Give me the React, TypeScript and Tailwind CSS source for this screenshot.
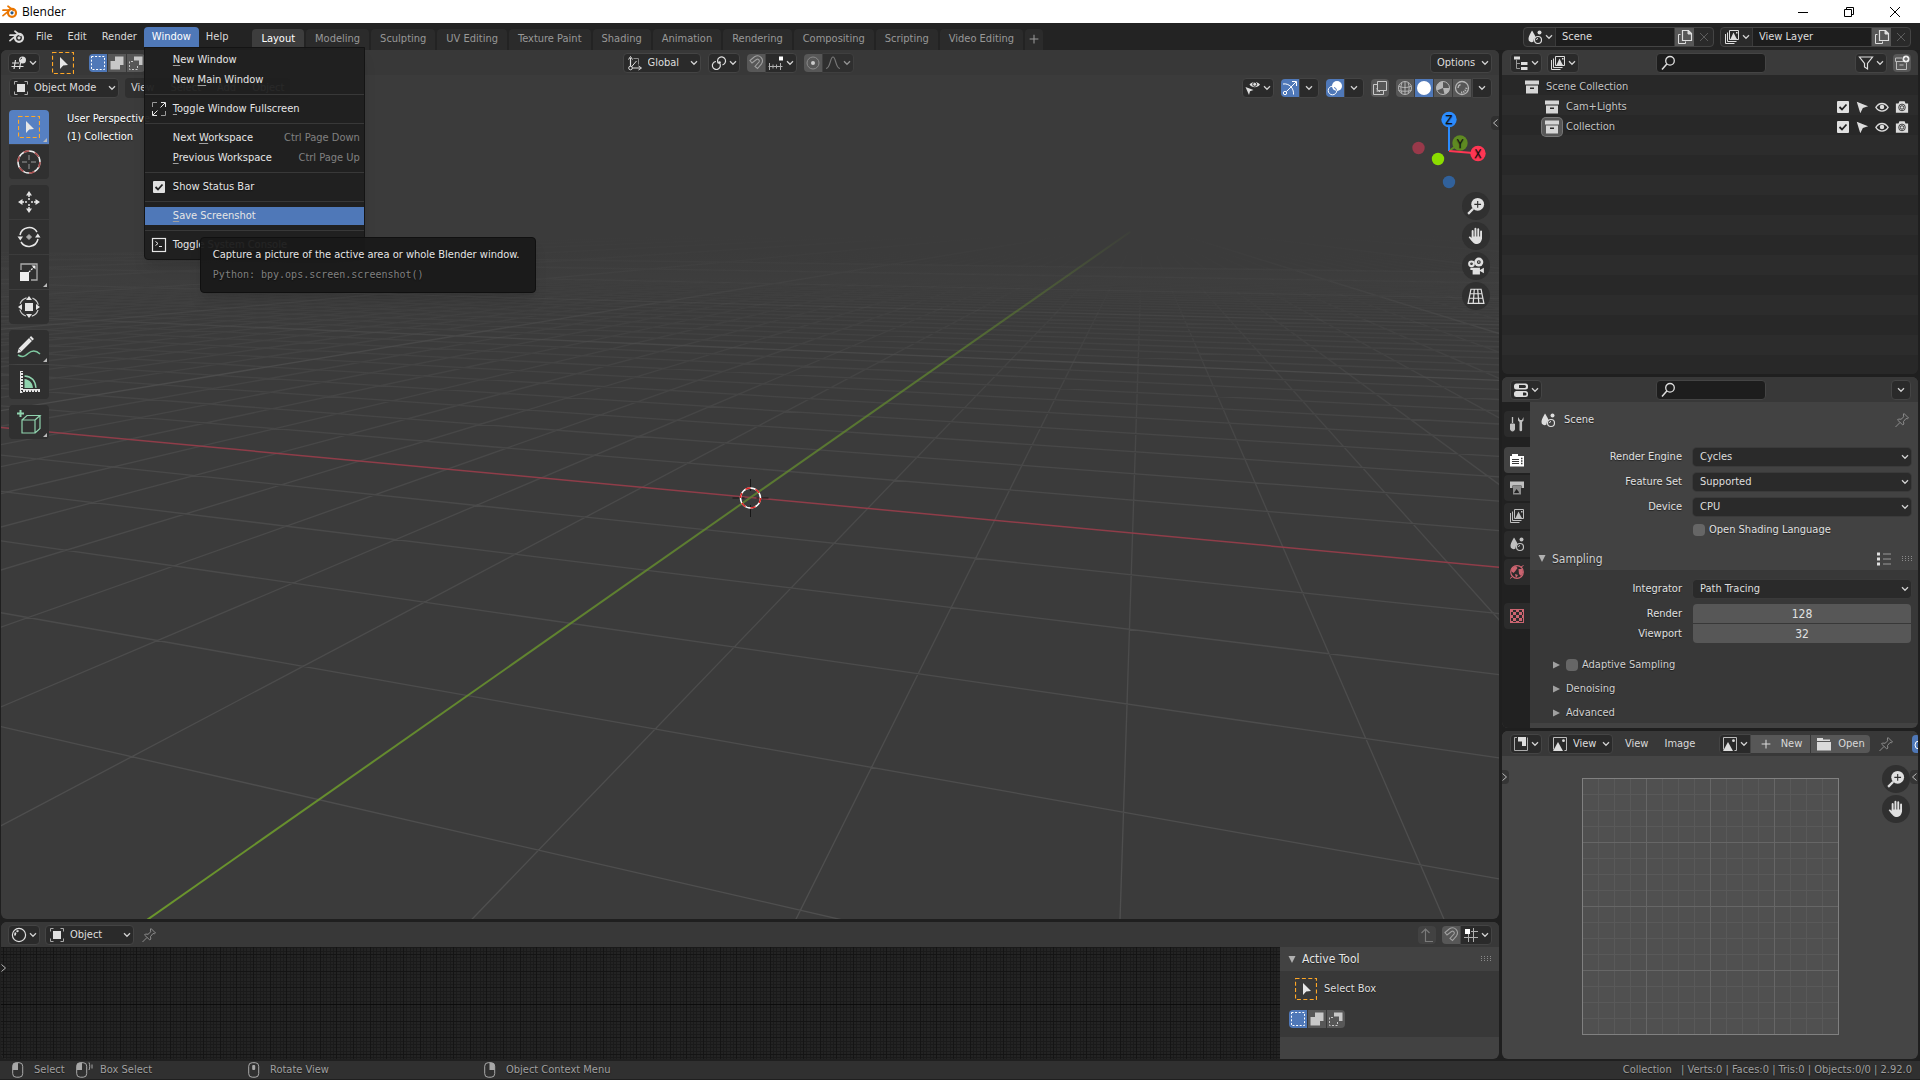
import type { ReactNode } from 'react';
import clsx from 'clsx';

/* ---------- icons ---------- */

function Svg({ children, size = 16, className }: { children: ReactNode; size?: number; className?: string }) {
  return (
    <svg
      width={size}
      height={size}
      viewBox="0 0 16 16"
      fill="none"
      stroke="currentColor"
      className={clsx('shrink-0', className)}
      aria-hidden="true"
    >
      {children}
    </svg>
  );
}

function BlenderLogo({ colored = false }: { colored?: boolean }) {
  return (
    <Svg className={colored ? 'text-[#ea7600]' : 'text-[#dcdcdc]'}>
      <path d="M1 6.2h6.5M6 2.2l5.5 4.2M1 11.6l5.5-4.4" strokeWidth="1.7" strokeLinecap="round" />
      <circle cx="10" cy="8.8" r="4" strokeWidth="2.2" />
      <circle cx="10" cy="8.8" r="1.6" fill={colored ? '#265787' : 'currentColor'} stroke="none" />
    </Svg>
  );
}

const Chevron = () => (
  <svg width="8" height="6" viewBox="0 0 8 6" fill="none" stroke="#d0d0d0" strokeWidth="1.3" className="shrink-0">
    <path d="M1 1.3l3 3 3-3" />
  </svg>
);

const SceneIcon = () => (
  <Svg>
    <path d="M5 1.5S1.5 7 1.5 10a3 3 0 0 0 5 2.4c.2-2.5 1.2-3.5 2-4.4C7.5 5 5 1.5 5 1.5z" fill="currentColor" stroke="none" />
    <circle cx="12.5" cy="3.5" r="2" fill="currentColor" stroke="none" />
    <circle cx="11" cy="11" r="3.5" strokeWidth="1.2" />
    <path d="M9.5 11a1.5 1.5 0 0 1 1.5-1.5" />
  </Svg>
);

const LayersIcon = () => (
  <Svg>
    <path d="M1.5 5v9.5h9M3.500 3.500v9h9" />
    <path d="M5.500 1.500h9v9h-9z" />
    <path d="M6.500 10l3-6.500 2.500 5 1 1.500z" fill="currentColor" stroke="none" />
    <path d="M12 3h1.500v1.500H12z" fill="currentColor" stroke="none" />
  </Svg>
);

const CopyIcon = () => (
  <Svg>
    <path d="M5.500 1.500h6l3 3v7h-9z" strokeWidth="1.2" />
    <path d="M11 1.500V5h3.500z" fill="currentColor" />
    <path d="M3.500 5.500h-2v9h7v-2" />
  </Svg>
);

const CrossIcon = () => (
  <Svg className="text-[#5c5c5c]">
    <path d="M4 4l8 8M12 4l-8 8" />
  </Svg>
);

const EditorIcon = () => (
  <Svg>
    <path d="M4.500 5l-1.500 9M9.500 8l-1 6M1 8h7M.5 11.500h12" strokeWidth="1.2" />
    <circle cx="11.500" cy="5" r="3.500" fill="currentColor" stroke="none" />
    <path d="M9.500 4.500a2 2 0 0 1 1.500-1.500" stroke="#333" />
  </Svg>
);

const SelectBox = () => (
  <svg width="22" height="22" viewBox="0 0 22 22" fill="none" className="shrink-0">
    <rect x=".5" y=".5" width="21" height="21" stroke="#ffa726" strokeDasharray="4 2.4" strokeWidth="1.2" />
    <path d="M8 5v12l3.200-3.400 4.800-.6z" fill="#e6e6e6" />
  </svg>
);

const SetIcon = () => (
  <Svg>
    <rect x="1.500" y="1.500" width="13" height="13" strokeDasharray="2 1.6" stroke="#fff" />
  </Svg>
);
const ExtendIcon = () => (
  <Svg>
    <path d="M6 1.500h8.500V10H11v4.500H1.500V6H6z" fill="#c8c8c8" stroke="none" />
  </Svg>
);
const SubtractIcon = () => (
  <Svg>
    <path d="M6 1.500h8.500V10H11V5.500H6z" fill="#c8c8c8" stroke="none" />
    <path d="M5 6.500H1.500v8h8V11" strokeDasharray="2 1.5" stroke="#c8c8c8" />
  </Svg>
);

const ObjectModeIcon = () => (
  <Svg>
    <path d="M1.500 4.500v-3h3M11.500 1.500h3v3M14.500 11.500v3h-3M4.500 14.500h-3v-3" stroke="#aaa" />
    <rect x="4" y="4" width="8" height="8" fill="#e0e0e0" stroke="none" />
  </Svg>
);

const AxesIcon = () => (
  <Svg>
    <path d="M3.500 13V3M3.500 13h10" strokeWidth="1.2" />
    <path d="M1.500 4.500l2-3 2 3M11.500 11l3 2-3 2M3.500 13l6-7" />
    <path d="M6.500 3.500h5v6" stroke="#888" />
    <circle cx="3.500" cy="13" r="1.800" fill="#222" />
  </Svg>
);

const PivotIcon = () => (
  <Svg>
    <path d="M7.500 8.500A4 4 0 1 1 11.500 9.800" strokeWidth="1.2" />
    <path d="M8.500 8a4 4 0 1 1-3.500-1.500" strokeWidth="1.2" />
    <circle cx="8.500" cy="7.500" r="1.300" fill="currentColor" stroke="none" />
  </Svg>
);

const MagnetIcon = () => (
  <Svg className="text-[#a0a0a0]">
    <path d="M2 5.500l4.500-3.700c5-3 10 2.200 7 7L9.500 13.500 7 11.500l4-4.500c1-2-1-3.500-2.500-2.500L4 8z" strokeWidth="1.1" />
  </Svg>
);

const SnapIcon = () => (
  <Svg>
    <path d="M.5 11.500h14M1.500 8v7M5 9.500v4M8.500 9.500v4M12.500 8v7" stroke="#b0b0b0" />
    <rect x="11" y="1.500" width="4" height="4" fill="#fff" stroke="none" />
  </Svg>
);

const SnapGridIcon = () => (
  <Svg>
    <path d="M5.500 7v8M10.500 1v14M8 4.500h7M1 10.500h14" stroke="#b0b0b0" />
    <rect x="2" y="2" width="5" height="5" fill="#fff" stroke="none" />
  </Svg>
);

const ProportionalIcon = () => (
  <Svg className="text-[#8a8a8a]">
    <circle cx="8" cy="8" r="6" />
    <circle cx="8" cy="8" r="2" fill="#ccc" stroke="none" />
  </Svg>
);

const FalloffIcon = () => (
  <Svg className="text-[#a0a0a0]">
    <path d="M1 13.500c4.500 0 4-11.500 7-11.500s2.500 11.500 7 11.500" strokeWidth="1.2" />
  </Svg>
);

const VisibilityIcon = () => (
  <Svg>
    <path d="M4.500 4.500c2.500-3.500 8-3.500 10.500 0-2.500 3.500-8 3.500-10.500 0z" fill="currentColor" stroke="none" />
    <circle cx="9.700" cy="4.300" r="2" stroke="#2b2b2b" />
    <path d="M.5 7l8 3-3.500 1.200L4 15z" fill="currentColor" stroke="none" />
  </Svg>
);

const GizmoIcon = () => (
  <Svg className="text-white">
    <circle cx="3" cy="13" r="1.700" />
    <path d="M4.300 11.700L14 2M10 1.500h4.500V6M1 4c6-1 11 4 10.500 10.500" />
  </Svg>
);

const OverlayIcon = () => (
  <Svg className="text-white">
    <circle cx="10" cy="6" r="5" fill="currentColor" stroke="none" />
    <circle cx="5.500" cy="10.500" r="4.300" />
    <path d="M7 7.500a3 3 0 0 1 2.500 3" stroke="#4f78b8" />
  </Svg>
);

const XrayIcon = () => (
  <Svg>
    <path d="M5.500 1.500h9v9h-9z" />
    <path d="M5 4.500H1.500v10h10V11" />
    <path d="M5 8v3.500h4" strokeDasharray="1.5 1" />
  </Svg>
);

const WireIcon = () => (
  <Svg className="text-[#b5b5b5]">
    <circle cx="8" cy="8" r="6.500" />
    <path d="M8 1.500v13M1.500 6c4 2 9 2 13 0M1.500 10.500c4 1 9 1 13 0M5 2.500c-1.500 4-1.500 7 0 11M11 2.500c1.500 4 1.500 7 0 11" />
  </Svg>
);
const SolidIcon = () => (
  <Svg>
    <circle cx="8" cy="8" r="7" fill="#fff" stroke="none" />
  </Svg>
);
const MaterialIcon = () => (
  <Svg className="text-[#b5b5b5]">
    <circle cx="8" cy="8" r="6.500" />
    <path d="M8 1.500V8L2 10.500A6.500 6.500 0 0 1 8 1.500zM8 8h6.500a6.500 6.500 0 0 1-5 6.300z" fill="currentColor" stroke="none" />
  </Svg>
);
const RenderedIcon = () => (
  <Svg className="text-[#b5b5b5]">
    <circle cx="8" cy="8" r="6.500" strokeWidth="1.3" />
    <path d="M4 8a4 4 0 0 1 2.500-3.500" strokeWidth="1.4" />
    <path d="M7 12.500c3 0 5-2 5.500-5" strokeDasharray="1.2 1" strokeWidth="2" />
  </Svg>
);

const OutlinerIcon = () => (
  <Svg>
    <path d="M1 1.500h6v3H1zM8 7h6.500v3H8zM8 12h6.500v3H8z" fill="currentColor" stroke="none" />
    <path d="M3.500 4.500v9M3.500 8.500H7M3.500 13.500H7" stroke="#999" />
  </Svg>
);

const SearchIcon = () => (
  <Svg>
    <circle cx="10" cy="5.800" r="4.300" strokeWidth="1.3" />
    <path d="M6.800 9L2 14.500" strokeWidth="1.5" />
  </Svg>
);

const FilterIcon = () => (
  <Svg>
    <path d="M1.500 2h13L9.500 8.500V14l-3-2V8.500z" strokeWidth="1.2" />
  </Svg>
);

const NewCollectionIcon = () => (
  <Svg className="text-[#bbb]">
    <path d="M8 3H1.500v3.500h8M2.500 6.500v8h10V8M5.500 10h4" />
    <circle cx="12" cy="4" r="3.500" fill="#eee" stroke="none" />
    <path d="M12 2v4M10 4h4" stroke="#444" />
  </Svg>
);

const CollectionIcon = () => (
  <Svg>
    <path d="M1 1.500h14v4H1zM2 6.500h12v8H2z" fill="#d6d6d6" stroke="none" />
    <path d="M6 8.500h4v1.500H6z" fill="#2a2a2a" stroke="none" />
  </Svg>
);

const CursorIcon = () => (
  <Svg size={14}>
    <path d="M2 2l13 5-6 2-3 6z" fill="currentColor" stroke="none" />
  </Svg>
);
const EyeIcon = () => (
  <Svg size={14}>
    <path d="M1 8.500c3.500-6 10.500-6 14 0-3.500 5.500-10.500 5.500-14 0z" strokeWidth="1.5" />
    <circle cx="8" cy="8" r="2.600" fill="currentColor" stroke="none" />
  </Svg>
);
const CameraIcon = () => (
  <Svg size={14}>
    <path d="M1 4h3l1-2.500h6L12 4h3v10.500H1z" fill="currentColor" stroke="none" />
    <circle cx="8" cy="8.500" r="3.800" stroke="#2b2b2b" />
    <circle cx="8" cy="8.500" r="2" stroke="#2b2b2b" />
  </Svg>
);

const PropertiesIcon = () => (
  <Svg>
    <rect x="1" y="1.500" width="14" height="6" rx="2.500" fill="currentColor" stroke="none" />
    <rect x="1" y="9" width="14" height="6" rx="2.500" fill="currentColor" stroke="none" />
    <path d="M6 3h5.500a1.500 1.500 0 0 1 0 3H6zM10 10.500h2a1.500 1.500 0 0 1 0 3h-2z" fill="#2b2b2b" stroke="none" />
  </Svg>
);

const PinIcon = () => (
  <Svg className="text-[#8c8c8c]">
    <path d="M10 1.500l4.500 4.500-1.200.8-1.300-.3-2.500 3 .3 2.500-1 1L3.500 8l1-1 2.500.3 2.800-2.500L9.300 3zM6 10.500L1.500 15" />
  </Svg>
);

const ToolTabIcon = () => (
  <Svg>
    <path d="M3.500 1v6" strokeWidth="1.3" />
    <path d="M1.500 8h4v5a2 2 0 0 1-4 0z" fill="currentColor" />
    <path d="M9 1v3.500l1.500 1.500V14a1.300 1.300 0 0 0 2.600 0V6L14.500 4.500V1l-1.500 3h-2z" fill="currentColor" stroke="none" />
  </Svg>
);
const RenderTabIcon = () => (
  <Svg>
    <path d="M1 4h2V2h6v2h6v10.500H1z" fill="currentColor" stroke="none" />
    <path d="M3 7.500h7M3 9.500h7M3 11.500h7" stroke="#3a3a3a" />
    <path d="M12 6.500h1.500M12 9h1.500M12 11.500h1.500" stroke="#3a3a3a" strokeWidth="1.5" />
  </Svg>
);
const OutputTabIcon = () => (
  <Svg>
    <path d="M1 1.500h14V8h-2.500V5.500h-9V8H1z" fill="currentColor" stroke="none" />
    <path d="M4 6h8v8.500H4z" fill="#8c8c8c" stroke="none" />
    <path d="M5 13l2.500-4 2 2.500.5 1.500z" fill="#222" stroke="none" />
  </Svg>
);
const WorldTabIcon = () => (
  <Svg className="text-[#cc6470]">
    <circle cx="8" cy="8" r="6.300" strokeWidth="1.2" />
    <path d="M3 4l4-2 1.500 2L6 7.500 4.500 9 2 7zM9.500 5l4 0 .5 4-2 3-2-2zM6 10l3 1-2 3z" fill="currentColor" stroke="none" />
    <path d="M12 3l2.500-1.500M3 13l-2 1.500" />
  </Svg>
);
const TextureTabIcon = () => (
  <Svg className="text-[#cc6470]">
    <rect x="1.500" y="1.500" width="13" height="13" />
    <path
      d="M1 1h3v3H1zM7 1h3v3H7zM13 1h2v3h-2zM4 4h3v3H4zM10 4h3v3h-3zM1 7h3v3H1zM7 7h3v3H7zM13 7h2v3h-2zM4 10h3v3H4zM10 10h3v3h-3zM1 13h3v2H1zM7 13h3v2H7z"
      fill="currentColor"
      stroke="none"
    />
  </Svg>
);

const ListIcon = () => (
  <Svg>
    <path d="M7 3h8M7 8h8M7 13h8" stroke="#999" />
    <path d="M1 3h3M1 8h3M1 13h3" strokeWidth="3" stroke="#e0e0e0" />
  </Svg>
);

const UvIcon = () => (
  <Svg>
    <path d="M4 1.500H1.500v13h13v-13" stroke="#aaa" />
    <path d="M5 1h8v9H9V5.500H5z" fill="currentColor" stroke="none" />
  </Svg>
);
const ImageIcon = () => (
  <Svg>
    <path d="M1.500 13.500v-12h13v13h-2" stroke="#bbb" />
    <path d="M1 15l5-9 5 9z" fill="currentColor" stroke="none" />
    <circle cx="11.500" cy="4.700" r="1.400" fill="currentColor" stroke="none" />
  </Svg>
);
const FolderIcon = () => (
  <Svg>
    <path d="M1 2h6v1.500h7V5H1zM1 6h14v8.500H1z" fill="currentColor" stroke="none" />
  </Svg>
);
const PlusIcon = () => (
  <Svg size={14}>
    <path d="M8 3v10M3 8h10" strokeWidth="1.2" />
  </Svg>
);

const TimelineIcon = () => (
  <Svg>
    <circle cx="8" cy="8" r="6.600" strokeWidth="1.2" />
    <path d="M4 8.500c0-3 1.500-4.500 3.500-4.500" strokeWidth="1.8" strokeDasharray="3 1.2" />
  </Svg>
);
const ParentIcon = () => (
  <Svg className="text-[#7a7a7a]">
    <path d="M6.500 2v12.500H14M2.500 6l4-4 4 4" strokeWidth="1.2" />
  </Svg>
);

const FullscreenIcon = () => (
  <Svg>
    <path d="M6 1.500H1.500V6M14.500 10v4.500H10" stroke="#999" />
    <path d="M10 1.500h4.500V6M14 2L9.500 6.500M6 14.500H1.500V10M2 14l4.500-4.500" />
  </Svg>
);
const ConsoleIcon = () => (
  <Svg>
    <rect x="1.500" y="1.500" width="13" height="13" strokeWidth="1.2" />
    <path d="M4.500 4.500l2.500 2-2.500 2M8 9.500h3" />
  </Svg>
);
const TickIcon = () => (
  <svg width="12" height="12" viewBox="0 0 12 12" className="pointer-events-none absolute inset-0">
    <path d="M2.500 6l2.500 2.500 4.500-5" stroke="#222" strokeWidth="1.8" fill="none" />
  </svg>
);

function MouseIcon({ button, drag = false }: { button: 'left' | 'middle' | 'right'; drag?: boolean }) {
  return (
    <svg width={drag ? 18 : 12} height="16" viewBox={drag ? '0 0 18 16' : '0 0 12 16'} fill="none" stroke="#a8a8a8">
      <rect x=".7" y=".7" width="10" height="14.500" rx="3.500" />
      {button === 'left' && <path d="M.7 8V4A3.300 3.300 0 0 1 4 .7h2V8z" fill="#a8a8a8" stroke="none" />}
      {button === 'right' && <path d="M5.500 8V.7h2A3.300 3.300 0 0 1 10.700 4v4z" fill="#a8a8a8" stroke="none" />}
      {button === 'middle' && <rect x="4.200" y="3" width="3" height="5" rx="1" fill="#a8a8a8" stroke="none" />}
      {drag && <path d="M13 .5c1 2.500 1 5 0 7.500M16 2.500v4" />}
    </svg>
  );
}

/* ---------- small building blocks ---------- */

const box = 'flex h-5 items-center rounded border border-[#444] bg-[#2a2a2a] text-[#dedede]';

function IconDrop({ icon, label, className }: { icon: ReactNode; label: string; className?: string }) {
  return (
    <button aria-label={label} className={clsx(box, 'w-8 shrink-0 justify-center gap-0.5', className)}>
      {icon}
      <Chevron />
    </button>
  );
}

function Toggle({ icon, label, on, className }: { icon: ReactNode; label: string; on?: boolean; className?: string }) {
  return (
    <button
      aria-label={label}
      aria-pressed={!!on}
      className={clsx('flex h-[18px] w-[18px] items-center justify-center', on ? 'bg-[#4f78b8]' : 'bg-[#575757]', className)}
    >
      {icon}
    </button>
  );
}

function SelectModes() {
  return (
    <div className="flex gap-px">
      <Toggle icon={<SetIcon />} label="Set" on className="rounded-l-sm" />
      <Toggle icon={<ExtendIcon />} label="Extend" />
      <Toggle icon={<SubtractIcon />} label="Subtract" className="rounded-r-sm" />
    </div>
  );
}

function HeaderSelect({ icon, value, label, className }: { icon: ReactNode; value: string; label: string; className: string }) {
  return (
    <div className={clsx(box, 'pr-0.5 pl-[3px]', className)}>
      {icon}
      <select aria-label={label} className="min-w-0 flex-1 appearance-none bg-transparent pl-[5px] outline-none">
        <option>{value}</option>
      </select>
      <Chevron />
    </div>
  );
}

function SearchBox({ label }: { label: string }) {
  return (
    <div className="flex h-5 w-[110px] items-center rounded border border-[#444] bg-[#1d1d1d] px-[3px] text-[#dedede]">
      <SearchIcon />
      <input type="search" aria-label={label} className="w-full min-w-0 bg-transparent outline-none" />
    </div>
  );
}

const Grip = () => (
  <svg width="12" height="6" viewBox="0 0 12 6" className="shrink-0">
    <path d="M0 .5h12M0 2.500h12M0 4.500h12" stroke="#8a8a8a" strokeDasharray="1 2" />
  </svg>
);

const DownTri = () => (
  <svg width="8" height="7" viewBox="0 0 8 7" className="shrink-0">
    <path d="M.5 0h7L4 7z" fill="#b0b0b0" />
  </svg>
);
const RightTri = () => (
  <svg width="7" height="8" viewBox="0 0 7 8" className="shrink-0">
    <path d="M0 .5v7L7 4z" fill="#a0a0a0" />
  </svg>
);

function Tick({ id, label }: { id?: string; label?: string }) {
  return (
    <span className="relative block h-3 w-3">
      <input
        id={id}
        type="checkbox"
        defaultChecked
        aria-label={label}
        className="block h-3 w-3 appearance-none rounded-[1px] bg-[#e0e0e0]"
      />
      <TickIcon />
    </span>
  );
}

/* ---------- top ---------- */

function TitleBar() {
  return (
    <header className="flex h-[23px] shrink-0 items-center bg-white pr-0.5 text-black [text-shadow:none]">
      <div className="flex items-center gap-1 pl-0.5">
        <BlenderLogo colored />
        <h1 className="font-['Open_Sans'] text-[12px]">Blender</h1>
      </div>
      <div className="ml-auto flex h-full">
        <button aria-label="Minimize" className="flex w-[46px] items-center justify-center">
          <svg width="10" height="10" viewBox="0 0 10 10" fill="none" stroke="#000">
            <path d="M0 5.500h10" />
          </svg>
        </button>
        <button aria-label="Restore" className="flex w-[46px] items-center justify-center">
          <svg width="10" height="10" viewBox="0 0 10 10" fill="none" stroke="#000">
            <path d="M.5 2.500h7v7h-7zM2.500 2.500v-2h7v7h-2" />
          </svg>
        </button>
        <button aria-label="Close" className="flex w-[46px] items-center justify-center">
          <svg width="10" height="10" viewBox="0 0 10 10" fill="none" stroke="#000">
            <path d="M0 0l10 10M10 0L0 10" />
          </svg>
        </button>
      </div>
    </header>
  );
}

function MenuItem({ icon, children, shortcut, active }: { icon?: ReactNode; children: ReactNode; shortcut?: string; active?: boolean }) {
  return (
    <li className={clsx('my-px text-[#e6e6e6]', active && 'bg-[#4f78b8]')}>
      <button className="flex h-[18px] w-full items-center pr-1 text-left">
        <span className="flex w-7 justify-center">{icon}</span>
        <span>{children}</span>
        {shortcut && <span className="ml-auto text-[#808080]">{shortcut}</span>}
      </button>
    </li>
  );
}

const Key = ({ children }: { children: string }) => (
  <span className="underline decoration-[#a0a0a0] underline-offset-2">{children}</span>
);
const Separator = () => <li className="my-1 h-px bg-[#383838]" />;

function WindowMenu() {
  return (
    <div className="absolute top-5 left-0 z-20 w-[221px] rounded-b border border-[#141414] bg-[#1f1f1f]/95 pt-0.5 pb-1 shadow-lg">
      <ul className="flex flex-col">
        <MenuItem><Key>N</Key>ew Window</MenuItem>
        <MenuItem>New <Key>M</Key>ain Window</MenuItem>
        <Separator />
        <MenuItem icon={<FullscreenIcon />}><Key>T</Key>oggle Window Fullscreen</MenuItem>
        <Separator />
        <MenuItem shortcut="Ctrl Page Down">Next <Key>W</Key>orkspace</MenuItem>
        <MenuItem shortcut="Ctrl Page Up"><Key>P</Key>revious Workspace</MenuItem>
        <Separator />
        <li className="my-px flex h-[18px] items-center">
          <span className="flex w-7 justify-center">
            <Tick id="status-bar" />
          </span>
          <label htmlFor="status-bar" className="text-[#e6e6e6]">Show Status Bar</label>
        </li>
        <Separator />
        <MenuItem active><Key>S</Key>ave Screenshot</MenuItem>
        <Separator />
        <MenuItem icon={<ConsoleIcon />}>Toggle System <Key>C</Key>onsole</MenuItem>
      </ul>
      <div
        role="tooltip"
        className="absolute top-[189px] left-[55px] w-[336px] rounded border border-[#101010] bg-[#191919]/95 px-3 py-[7px] leading-5 whitespace-nowrap shadow-lg"
      >
        <p className="text-[#e6e6e6]">Capture a picture of the active area or whole Blender window.</p>
        <p className="font-['DejaVu_Sans_Mono'] text-[10px] leading-5 text-[#808080]">Python: bpy.ops.screen.screenshot()</p>
      </div>
    </div>
  );
}

const workspaces = [
  'Layout', 'Modeling', 'Sculpting', 'UV Editing', 'Texture Paint', 'Shading',
  'Animation', 'Rendering', 'Compositing', 'Scripting', 'Video Editing',
];

function DataBlock({ icon, name, label }: { icon: ReactNode; name: string; label: string }) {
  return (
    <div className="flex h-5 w-[191px] overflow-hidden rounded border border-[#444] bg-[#2a2a2a] text-[#dedede]">
      <button aria-label={`Browse ${label}`} className="flex w-[31px] items-center justify-center gap-0.5">
        {icon}
        <Chevron />
      </button>
      <input
        aria-label={label}
        defaultValue={name}
        className="min-w-0 flex-1 border-x border-[#3a3a3a] bg-[#1d1d1d] px-1.5 outline-none"
      />
      <button aria-label={`New ${label}`} className="flex w-[19px] items-center justify-center bg-[#575757]">
        <CopyIcon />
      </button>
      <button aria-label={`Remove ${label}`} className="flex w-[19px] items-center justify-center">
        <CrossIcon />
      </button>
    </div>
  );
}

function TopBar() {
  const menu = 'h-5 px-[7px] text-[#dadada]';
  return (
    <div className="flex h-[27px] shrink-0 items-center bg-[#232323] pr-[9px] pl-[9px]">
      <BlenderLogo />
      <nav className="flex pl-1">
        <button className={menu}>File</button>
        <button className={clsx(menu, 'ml-px')}>Edit</button>
        <button className={clsx(menu, 'ml-px')}>Render</button>
        <div className="relative">
          <button className="h-5 w-[55px] rounded-t bg-[#4f78b8] text-white">Window</button>
          <WindowMenu />
        </div>
        <button className={menu}>Help</button>
      </nav>
      <div className="flex gap-0.5 self-end pl-[17px]">
        {workspaces.map((name, i) => (
          <button
            key={name}
            className={clsx(
              'h-[21px] rounded-t px-[9px] pb-px',
              i === 0 ? 'bg-[#3d3d3d] text-white' : 'bg-[#2b2b2b] text-[#989898]',
            )}
          >
            {name}
          </button>
        ))}
        <button aria-label="Add Workspace" className="flex h-[21px] w-[18px] items-center justify-center rounded-t bg-[#2b2b2b] pb-0.5 text-[#989898]">
          <PlusIcon />
        </button>
      </div>
      <div className="ml-auto flex gap-1.5">
        <DataBlock icon={<SceneIcon />} name="Scene" label="Scene" />
        <DataBlock icon={<LayersIcon />} name="View Layer" label="View Layer" />
      </div>
    </div>
  );
}

/* ---------- 3D viewport ---------- */

// floor plane to screen, in a 1499x869 viewport
function project(k: number, j: number) {
  const w = 1 - 0.0383 * k + 0.1048 * j;
  return {
    w,
    x: (750 + 84 * k + 119.7 * j) / w,
    y: (497.5 - 8.54 * k + 23.37 * j) / w - 50,
  };
}

function segment(axis: 'k' | 'j', n: number) {
  const at = (t: number) => (axis === 'k' ? project(n, t) : project(t, n));
  // keep both ends in front of the camera
  const limit = axis === 'k' ? (0.15 - 1 + 0.0383 * n) / 0.1048 : (1 + 0.1048 * n - 0.15) / 0.0383;
  const a = at(limit);
  const b = at(axis === 'k' ? limit + 300 : limit - 600);
  return `M${a.x.toFixed(1)} ${a.y.toFixed(1)}L${b.x.toFixed(1)} ${b.y.toFixed(1)}`;
}

function FloorGrid() {
  const minor: string[] = [];
  const major: string[] = [];
  for (let n = -70; n <= 50; n++) {
    if (n === 0) continue;
    const target = n % 10 === 0 ? major : minor;
    target.push(segment('k', n));
    if (n > -9) target.push(segment('j', n));
  }
  return (
    <svg viewBox="0 0 1499 869" preserveAspectRatio="xMidYMid slice" className="absolute inset-0 h-full w-full" fill="none" aria-hidden="true">
      <defs>
        <linearGradient id="minor" gradientUnits="userSpaceOnUse" x1="0" y1="200" x2="0" y2="869">
          <stop offset="0" stopColor="#4d4d4d" stopOpacity="0" />
          <stop offset=".12" stopColor="#4d4d4d" stopOpacity=".35" />
          <stop offset=".35" stopColor="#4d4d4d" stopOpacity=".8" />
          <stop offset="1" stopColor="#4f4f4f" />
        </linearGradient>
        <linearGradient id="major" gradientUnits="userSpaceOnUse" x1="0" y1="185" x2="0" y2="869">
          <stop offset="0" stopColor="#4d4d4d" stopOpacity="0" />
          <stop offset=".2" stopColor="#4d4d4d" stopOpacity=".9" />
          <stop offset="1" stopColor="#4f4f4f" />
        </linearGradient>
        <linearGradient id="green" gradientUnits="userSpaceOnUse" x1="0" y1="173" x2="0" y2="869">
          <stop offset="0" stopColor="#64892d" stopOpacity="0" />
          <stop offset=".2" stopColor="#5d8030" stopOpacity=".8" />
          <stop offset="1" stopColor="#6b962c" />
        </linearGradient>
      </defs>
      <path d={minor.join('')} stroke="url(#minor)" strokeWidth="1.300" />
      <path d={major.join('')} stroke="url(#major)" strokeWidth="1.300" />
      <path d={segment('j', 0)} stroke="#8f3d49" strokeWidth="1.500" />
      <path d={segment('k', 0)} stroke="url(#green)" strokeWidth="2" />
      <path d="M750 429v12M750 455v12M732 448h12M756 448h12" stroke="#171717" />
      <circle cx="750" cy="448" r="10" stroke="#fff" strokeWidth="1.500" />
      <circle cx="750" cy="448" r="10" stroke="#e02020" strokeWidth="1.500" strokeDasharray="5.2 5.2" />
    </svg>
  );
}

function AxisGizmo() {
  return (
    <svg width="74" height="80" viewBox="0 0 74 80" className="absolute top-[59px] right-[13px]" fontSize="12" textAnchor="middle" aria-hidden="true">
      <circle cx="6.500" cy="39" r="6.200" fill="#98394a" />
      <circle cx="37" cy="73" r="6.200" fill="#31619b" />
      <path d="M37 42l11-8" stroke="#5f8a22" strokeWidth="2" />
      <circle cx="48" cy="34" r="7.700" fill="#5f8a22" />
      <path d="M37 42V10" stroke="#2b8cff" strokeWidth="2" />
      <path d="M37 42l30 2.500" stroke="#ff3653" strokeWidth="2" />
      <circle cx="37" cy="10.500" r="7.700" fill="#2b8cff" />
      <circle cx="26" cy="50" r="6.200" fill="#8bdc00" />
      <circle cx="66" cy="44.500" r="7.700" fill="#ff3653" />
      <g fill="#111">
        <text x="37" y="15">Z</text>
        <text x="48" y="38.500">Y</text>
        <text x="66" y="49">X</text>
      </g>
    </svg>
  );
}

const ZoomIcon = () => (
  <Svg size={18}>
    <circle cx="9.500" cy="6.500" r="5.700" fill="currentColor" stroke="none" />
    <path d="M5.500 10.500L1 15" strokeWidth="2" />
    <path d="M9.500 3.500v6M6.500 6.500h6" stroke="#303030" />
  </Svg>
);
const HandIcon = () => (
  <Svg size={18}>
    <path d="M5 10V3.500M7.500 9V1.500M10 9V2M12.500 10V4" strokeWidth="1.7" strokeLinecap="round" />
    <path d="M4.200 8.500h9.200c0 4-1.500 6.500-4.400 6.500-3 0-4-1.500-7.500-6 .6-1 1.500-.8 2.700.8z" fill="currentColor" stroke="none" />
  </Svg>
);
const MovieIcon = () => (
  <Svg size={18}>
    <circle cx="4" cy="6" r="3" fill="currentColor" stroke="none" />
    <circle cx="10.500" cy="4.500" r="4" fill="currentColor" stroke="none" />
    <path d="M3 9.500h8.500v2l3.500-2v5l-3.500-2v3H5v-4H3z" fill="currentColor" stroke="none" />
    <circle cx="4" cy="6" r=".7" stroke="#303030" />
    <circle cx="10.500" cy="4.500" r="1.200" stroke="#303030" />
  </Svg>
);
const PerspIcon = () => (
  <Svg size={18}>
    <path d="M3.500 2h9l2.500 12.500H1zM2.800 6h10.400M2 10h12M6.500 2L5.500 14.500M9.500 2l1 12.500" strokeWidth="1.1" />
  </Svg>
);

function RoundButton({ icon, label }: { icon: ReactNode; label: string }) {
  return (
    <button aria-label={label} className="flex h-7 w-7 items-center justify-center rounded-full bg-[#303030] text-[#e0e0e0]">
      {icon}
    </button>
  );
}

const tools: { name: string; icon: ReactNode; more?: boolean }[][] = [
  [
    { name: 'Select Box', icon: <SelectBox />, more: true },
    {
      name: 'Cursor',
      icon: (
        <svg width="26" height="26" viewBox="0 0 26 26" fill="none">
          <circle cx="13" cy="13" r="11" stroke="#eee" strokeWidth="1.5" />
          <circle cx="13" cy="13" r="11" stroke="#a84848" strokeWidth="1.5" strokeDasharray="5.7 5.8" />
          <path d="M13 6v5M13 15v5M6 13h5M15 13h5" stroke="#999" />
        </svg>
      ),
    },
  ],
  [
    {
      name: 'Move',
      icon: (
        <svg width="24" height="24" viewBox="0 0 24 24" fill="#e6e6e6">
          <path d="M12 1l3 4.500H9zM12 23l3-4.500H9zM1 12l4.500-3v6zM23 12l-4.500-3v6z" />
          <path d="M12 5v5M12 14v5M5 12h5M14 12h5" stroke="#e6e6e6" strokeWidth="1.5" strokeDasharray="2 1" />
        </svg>
      ),
    },
    {
      name: 'Rotate',
      icon: (
        <svg width="24" height="24" viewBox="0 0 24 24" fill="#e6e6e6">
          <path d="M3 10a9.300 9.300 0 0 1 17-3M21 14a9.300 9.300 0 0 1-17 3" fill="none" stroke="#e6e6e6" strokeWidth="1.5" />
          <path d="M.5 11.500h5.500l-2.700 4zM18 12.500h5.500l-2.700-4z" />
          <path d="M12 9.500l2.500 2.500-2.500 2.500L9.500 12z" fill="#aaa" stroke="#aaa" />
        </svg>
      ),
    },
    {
      name: 'Scale',
      more: true,
      icon: (
        <svg width="22" height="22" viewBox="0 0 22 22" fill="none">
          <path d="M3 9V3h16v16h-6" stroke="#aaa" strokeWidth="1.3" />
          <path d="M2 11h9v9H2z" fill="#eee" />
          <path d="M11 11l5-5" stroke="#eee" strokeWidth="1.3" strokeDasharray="2 1" />
          <path d="M17.500 4.500v4l-4-4z" fill="#eee" />
        </svg>
      ),
    },
    {
      name: 'Transform',
      icon: (
        <svg width="24" height="24" viewBox="0 0 24 24" fill="#e6e6e6">
          <circle cx="12" cy="12" r="9.500" fill="none" stroke="#ccc" strokeWidth="1.2" strokeDasharray="9 6" strokeDashoffset="-3" />
          <path d="M8 8h8v8H8zM12 1l3 4H9zM12 23l3-4H9zM1 12l4-3v6zM23 12l-4-3v6z" />
        </svg>
      ),
    },
  ],
  [
    {
      name: 'Annotate',
      more: true,
      icon: (
        <svg width="26" height="24" viewBox="0 0 26 24" fill="none">
          <path d="M4 15L14.500 4.500" stroke="#e8e8e8" strokeWidth="4" />
          <path d="M15 4l1.500-1.500" stroke="#e8e8e8" strokeWidth="4" />
          <path d="M1.500 18l1-4 3 3z" fill="#e8e8e8" />
          <path d="M2 20c5 3 7 1 10-1.500 4-3.500 8-3.500 12 .5" stroke="#7fc8a0" strokeWidth="1.5" />
        </svg>
      ),
    },
    {
      name: 'Measure',
      icon: (
        <svg width="24" height="24" viewBox="0 0 24 24" fill="none">
          <path d="M4.500 1v22M4 20.500h19" stroke="#e6e6e6" strokeWidth="3" />
          <path d="M5 2v20M5 21.500h18" stroke="#333" strokeDasharray="1 2" strokeWidth="2" />
          <path d="M7.500 18V9c5 .5 8 4 8.500 9z" fill="#8fd3ae" />
          <path d="M7.500 6c7 .5 11 5 11.500 12" stroke="#8fd3ae" strokeWidth="1.3" />
        </svg>
      ),
    },
  ],
  [
    {
      name: 'Add Cube',
      more: true,
      icon: (
        <svg width="26" height="26" viewBox="0 0 26 26" fill="none" stroke="#8fd3ae" strokeWidth="1.2">
          <path d="M6 11h13v13H6zM6 11l5-4.500h13L19 11M24 6.500v13L19 24" />
          <path d="M4.500 1v7M1 4.500h7" strokeWidth="2" />
        </svg>
      ),
    },
  ],
];

function Toolbar() {
  return (
    <div className="flex w-10 flex-col gap-1.5">
      {tools.map((group, g) => (
        <div key={g} className="flex flex-col gap-px overflow-hidden rounded">
          {group.map((tool) => (
            <button
              key={tool.name}
              aria-label={tool.name}
              className={clsx(
                'relative flex h-[34px] items-center justify-center',
                tool.name === 'Select Box' ? 'bg-[#5680c2]' : 'bg-[#303030]',
              )}
            >
              {tool.icon}
              {tool.more && (
                <svg width="4" height="4" viewBox="0 0 4 4" className="absolute right-0.5 bottom-0.5">
                  <path d="M4 0v4H0z" fill="#bbb" />
                </svg>
              )}
            </button>
          ))}
        </div>
      ))}
    </div>
  );
}

function RegionTab({ side, className }: { side: 'left' | 'right'; className: string }) {
  return (
    <button
      aria-label="Toggle region"
      className={clsx('absolute flex h-3.5 items-center', side === 'right' ? 'right-0 w-2 rounded-l' : 'left-0 w-[7px] rounded-r', className)}
    >
      <svg width="8" height="8" viewBox="0 0 8 8" fill="none" stroke="#bbb" className="shrink-0">
        <path d={side === 'right' ? 'M6.500 .5L2.500 4l4 3.500' : 'M.5 .5l4 3.500-4 3.500'} />
      </svg>
    </button>
  );
}

function Viewport() {
  return (
    <section className="relative flex min-h-0 flex-1 flex-col overflow-hidden rounded-md bg-[#3b3b3b]">
      <FloorGrid />
      <div className="relative flex h-[25px] items-center bg-[#383838] pr-[7px] pl-[7px]">
        <div className="flex flex-1 items-center">
          <IconDrop icon={<EditorIcon />} label="Editor Type" />
          <div className="pr-[15px] pl-3">
            <SelectBox />
          </div>
          <SelectModes />
        </div>
        <div className="mr-6 flex gap-[7px]">
          <HeaderSelect icon={<AxesIcon />} value="Global" label="Transform Orientation" className="w-[78px]" />
          <IconDrop icon={<PivotIcon />} label="Pivot Point" />
          <div className="flex items-center">
            <Toggle icon={<MagnetIcon />} label="Snap" className="rounded-l" />
            <IconDrop icon={<SnapIcon />} label="Snapping" className="rounded-l-none" />
          </div>
          <div className="flex items-center">
            <Toggle icon={<ProportionalIcon />} label="Proportional Editing" className="rounded-l" />
            <IconDrop icon={<FalloffIcon />} label="Falloff" className="rounded-l-none opacity-60" />
          </div>
        </div>
        <div className="flex flex-1 justify-end">
          <button className={clsx(box, 'w-[62px] justify-between pr-0.5 pl-1.5')}>
            Options
            <Chevron />
          </button>
        </div>
      </div>
      <div className="relative flex items-center justify-between pt-[3px] pr-[7px] pl-2">
        <div className="flex items-center gap-1.5">
          <HeaderSelect icon={<ObjectModeIcon />} value="Object Mode" label="Mode" className="w-[110px]" />
          <div className="flex h-5 items-center gap-4 rounded bg-[#2f2f2f] px-1.5 text-[#dadada]">
            <button>View</button>
            <button>Select</button>
            <button>Add</button>
            <button>Object</button>
          </div>
        </div>
        <div className="flex items-center gap-[7px]">
          <IconDrop icon={<VisibilityIcon />} label="Visibility" />
          <div className="flex items-center">
            <Toggle icon={<GizmoIcon />} label="Gizmos" on className="rounded-l" />
            <button aria-label="Gizmo options" className={clsx(box, 'w-5 justify-center rounded-l-none')}><Chevron /></button>
          </div>
          <div className="flex items-center">
            <Toggle icon={<OverlayIcon />} label="Overlays" on className="rounded-l" />
            <button aria-label="Overlay options" className={clsx(box, 'w-5 justify-center rounded-l-none')}><Chevron /></button>
          </div>
          <Toggle icon={<XrayIcon />} label="X-Ray" className="rounded text-[#c8c8c8]" />
          <div className="flex items-center gap-px">
            <Toggle icon={<WireIcon />} label="Wireframe" className="rounded-l" />
            <Toggle icon={<SolidIcon />} label="Solid" on />
            <Toggle icon={<MaterialIcon />} label="Material Preview" />
            <Toggle icon={<RenderedIcon />} label="Rendered" />
            <button aria-label="Shading options" className={clsx(box, 'w-5 justify-center rounded-l-none')}><Chevron /></button>
          </div>
        </div>
      </div>
      <div className="relative flex gap-[18px] pt-3 pl-2">
        <Toolbar />
        <div className="leading-[18px] text-white">
          <p>User Perspective</p>
          <p>(1) Collection</p>
        </div>
      </div>
      <AxisGizmo />
      <div className="absolute top-[142px] right-[9px] flex flex-col gap-0.5">
        <RoundButton icon={<ZoomIcon />} label="Zoom" />
        <RoundButton icon={<HandIcon />} label="Pan" />
        <RoundButton icon={<MovieIcon />} label="Camera View" />
        <RoundButton icon={<PerspIcon />} label="Perspective" />
      </div>
      <RegionTab side="right" className="top-[66px] bg-[#303030]" />
    </section>
  );
}

/* ---------- graph editor ---------- */

function GraphGrid() {
  return (
    <svg className="absolute inset-0 h-full w-full" aria-hidden="true">
      <defs>
        <pattern id="graph" width="50" height="50" x="2" y="7" patternUnits="userSpaceOnUse">
          <path
            d="M3.500 0v50M7.500 0v50M10.500 0v50M13.500 0v50M20.500 0v50M23.500 0v50M27.500 0v50M30.500 0v50M37.500 0v50M40.500 0v50M43.500 0v50M47.500 0v50M0 3.500h50M0 7.500h50M0 10.500h50M0 13.500h50M0 20.500h50M0 23.500h50M0 27.500h50M0 30.500h50M0 37.500h50M0 40.500h50M0 43.500h50M0 47.500h50"
            stroke="#1a1a1a"
          />
          <path d="M.5 0v50M17.500 0v50M33.500 0v50M0 .5h50M0 17.500h50M0 33.500h50" stroke="#141414" />
        </pattern>
      </defs>
      <rect width="100%" height="100%" fill="#232323" />
      <rect width="100%" height="100%" fill="url(#graph)" />
      <path d="M0 57.500h1280" stroke="#0c0c0c" />
    </svg>
  );
}

function GraphEditor() {
  return (
    <section className="flex h-[137px] shrink-0 flex-col overflow-hidden rounded-md bg-[#424242]">
      <div className="flex h-[25px] shrink-0 items-center justify-between bg-[#383838] pr-[7px] pl-[7px]">
        <div className="flex items-center gap-[5px]">
          <IconDrop icon={<TimelineIcon />} label="Editor Type" />
          <HeaderSelect icon={<ObjectModeIcon />} value="Object" label="Mode" className="w-[89px]" />
          <button aria-label="Pin" className="pl-0.5"><PinIcon /></button>
        </div>
        <div className="flex items-center gap-1.5">
          <Toggle icon={<ParentIcon />} label="Parent Node Tree" className="rounded bg-[#424242]!" />
          <div className="flex items-center">
            <Toggle icon={<MagnetIcon />} label="Snap" className="rounded-l" />
            <IconDrop icon={<SnapGridIcon />} label="Snapping" className="rounded-l-none" />
          </div>
        </div>
      </div>
      <div className="flex min-h-0 flex-1">
        <div className="relative flex-1">
          <GraphGrid />
          <RegionTab side="left" className="top-[14px]" />
        </div>
        <aside className="w-[219px]">
          <h2 className="flex h-6 items-center gap-1.5 pr-1.5 pl-2 text-[12px] text-[#e6e6e6]">
            <DownTri />
            <span className="flex-1">Active Tool</span>
            <Grip />
          </h2>
          <div className="h-[66px] bg-[#383838] pt-[7px] pl-[9px]">
            <div className="flex items-center gap-[7px] pb-2.5 pl-1.5 text-[#dedede]">
              <SelectBox />
              Select Box
            </div>
            <SelectModes />
          </div>
        </aside>
      </div>
    </section>
  );
}

/* ---------- right column ---------- */

function OutlinerRow({ name, active }: { name: string; active?: boolean }) {
  return (
    <li className="flex h-5 items-center gap-1 pr-[9px] pl-10">
      <span className={clsx('flex h-[18px] w-5 items-center justify-center rounded', active && 'bg-[#575757] ring-1 ring-[#777]')}>
        <CollectionIcon />
      </span>
      <span className="flex-1">{name}</span>
      <span className="flex items-center gap-1.5 text-[#dcdcdc]">
        <Tick label={`Exclude ${name}`} />
        <CursorIcon />
        <EyeIcon />
        <CameraIcon />
      </span>
    </li>
  );
}

function Outliner() {
  return (
    <section className="flex h-[324px] shrink-0 flex-col overflow-hidden rounded-md bg-[#282828]">
      <div className="flex h-[25px] shrink-0 items-center bg-[#3a3a3a] pr-[7px] pl-2">
        <div className="flex flex-1 gap-[5px]">
          <IconDrop icon={<OutlinerIcon />} label="Editor Type" />
          <IconDrop icon={<LayersIcon />} label="Display Mode" />
        </div>
        <SearchBox label="Search outliner" />
        <div className="flex flex-1 items-center justify-end gap-1.5">
          <IconDrop icon={<FilterIcon />} label="Filter" />
          <Toggle icon={<NewCollectionIcon />} label="New Collection" className="rounded" />
        </div>
      </div>
      <ul className="flex-1 bg-[repeating-linear-gradient(#282828_0_20px,#2c2c2c_20px_40px)] pt-0.5 text-[#c4c4c4]">
        <li className="flex h-5 items-center gap-1.5 pl-[22px]">
          <CollectionIcon />
          Scene Collection
        </li>
        <OutlinerRow name="Cam+Lights" />
        <OutlinerRow name="Collection" active />
      </ul>
    </section>
  );
}

function PropRow({ id, label, value }: { id: string; label: string; value: string }) {
  return (
    <div className="flex items-center gap-[11px]">
      <label htmlFor={id} className="flex-1 text-right text-[#e0e0e0]">{label}</label>
      <div className="relative w-[218px]">
        <select id={id} className="h-[18px] w-full appearance-none rounded bg-[#2a2a2a] px-[7px] text-[#dedede] ring-1 ring-[#3a3a3a] outline-none">
          <option>{value}</option>
        </select>
        <span className="pointer-events-none absolute top-1.5 right-0.5">
          <Chevron />
        </span>
      </div>
    </div>
  );
}

function NumRow({ id, label, value, className }: { id: string; label: string; value: string; className: string }) {
  return (
    <div className="flex h-[19px] items-center gap-[11px]">
      <label htmlFor={id} className="flex-1 text-right text-[#e0e0e0]">{label}</label>
      <input
        id={id}
        defaultValue={value}
        className={clsx('h-[19px] w-[218px] bg-[#575757] text-center text-[12px] text-[#e0e0e0] outline-none', className)}
      />
    </div>
  );
}

const propTabs: { name: string; icon: ReactNode }[] = [
  { name: 'Tool', icon: <ToolTabIcon /> },
  { name: 'Render', icon: <RenderTabIcon /> },
  { name: 'Output', icon: <OutputTabIcon /> },
  { name: 'View Layer', icon: <LayersIcon /> },
  { name: 'Scene', icon: <SceneIcon /> },
  { name: 'World', icon: <WorldTabIcon /> },
  { name: 'Texture', icon: <TextureTabIcon /> },
];

function SubPanel({ name, children }: { name: string; children?: ReactNode }) {
  return (
    <div className="flex h-6 items-center gap-1.5 pl-[11px] text-[#d0d0d0]">
      <RightTri />
      {children ?? name}
    </div>
  );
}

function Properties() {
  const checkbox = 'h-3 w-3 appearance-none rounded-sm bg-[#666]';
  return (
    <section className="flex h-[351px] shrink-0 flex-col overflow-hidden rounded-md bg-[#424242]">
      <div className="flex h-[25px] shrink-0 items-center bg-[#383838] pr-[7px] pl-2">
        <div className="flex-1">
          <IconDrop icon={<PropertiesIcon />} label="Editor Type" />
        </div>
        <SearchBox label="Search properties" />
        <div className="flex flex-1 justify-end">
          <button aria-label="Options" className={clsx(box, 'w-5 justify-center')}><Chevron /></button>
        </div>
      </div>
      <div className="flex min-h-0 flex-1">
        <div className="flex w-7 flex-col gap-0.5 bg-[#212121] pt-[9px] pl-0.5">
          {propTabs.map(({ name, icon }) => (
            <button
              key={name}
              aria-label={name}
              className={clsx(
                'flex h-[26px] items-center justify-center rounded-l',
                name === 'Render' ? 'bg-[#424242] text-white' : 'bg-[#2b2b2b] text-[#c0c0c0]',
                name === 'Render' && 'mt-2',
                name === 'Texture' && 'mt-4',
              )}
            >
              {icon}
            </button>
          ))}
        </div>
        <div className="flex flex-1 flex-col">
          <div className="flex h-9 items-center gap-2 pr-2 pl-2.5 text-[#dedede]">
            <SceneIcon />
            <span className="flex-1">Scene</span>
            <button aria-label="Pin"><PinIcon /></button>
          </div>
          <div className="flex flex-col gap-[7px] pt-2.5 pr-[7px]">
            <PropRow id="engine" label="Render Engine" value="Cycles" />
            <PropRow id="feature" label="Feature Set" value="Supported" />
            <PropRow id="device" label="Device" value="CPU" />
            <label className="ml-auto flex h-3.5 w-[218px] items-center gap-1 text-[#e0e0e0]">
              <input type="checkbox" className={checkbox} />
              Open Shading Language
            </label>
          </div>
          <h2 className="mt-2.5 flex h-[23px] items-center pr-1 pl-2 text-[12px] text-[#d0d0d0]">
            <DownTri />
            <span className="flex-1 pl-1.5">Sampling</span>
            <ListIcon />
            <span className="pl-2.5"><Grip /></span>
          </h2>
          <div className="h-[153px] bg-[#383838] pt-2.5">
            <div className="flex flex-col pr-[7px]">
              <PropRow id="integrator" label="Integrator" value="Path Tracing" />
              <div className="flex flex-col gap-px pt-1.5">
                <NumRow id="render" label="Render" value="128" className="rounded-t" />
                <NumRow id="viewport" label="Viewport" value="32" className="rounded-b" />
              </div>
            </div>
            <div className="pt-2.5 pl-3">
              <SubPanel name="Adaptive Sampling">
                <label className="flex items-center gap-1">
                  <input type="checkbox" className={checkbox} />
                  Adaptive Sampling
                </label>
              </SubPanel>
              <SubPanel name="Denoising" />
              <SubPanel name="Advanced" />
            </div>
          </div>
        </div>
      </div>
    </section>
  );
}

function ImageEditor() {
  return (
    <section className="flex min-h-0 flex-1 flex-col overflow-hidden rounded-md bg-[#454545]">
      <div className="flex h-[25px] shrink-0 items-center bg-[#383838] pl-2 text-[#dadada]">
        <IconDrop icon={<UvIcon />} label="Editor Type" />
        <HeaderSelect icon={<ImageIcon />} value="View" label="Mode" className="ml-1.5 w-[65px]" />
        <button className="pl-3">View</button>
        <button className="pl-4">Image</button>
        <div className="ml-auto flex items-center">
          <IconDrop icon={<ImageIcon />} label="Browse Image" className="rounded-r-none" />
          <button className="mr-px flex h-[18px] w-[59px] items-center justify-center gap-2 bg-[#575757]">
            <PlusIcon />
            New
          </button>
          <button className="flex h-[18px] w-[59px] items-center justify-center gap-1.5 rounded-r bg-[#575757]">
            <FolderIcon />
            Open
          </button>
          <button aria-label="Pin" className="px-2"><PinIcon /></button>
          <span className="ml-2.5 flex h-[18px] w-1.5 items-center overflow-hidden rounded-l bg-[#4f78b8] text-white">
            <svg width="6" height="12" viewBox="0 0 6 12" fill="none" stroke="currentColor"><circle cx="7" cy="7" r="4" /></svg>
          </span>
        </div>
      </div>
      <div className="relative flex-1">
        <svg width="257" height="257" viewBox="0 0 257 257" className="mx-auto mt-[22px]" fill="none" aria-hidden="true">
          <defs>
            <pattern id="uv" width="64" height="64" patternUnits="userSpaceOnUse">
              <path d="M16.500 0v64M32.500 0v64M48.500 0v64M0 16.500h64M0 32.500h64M0 48.500h64" stroke="#595959" />
              <path d="M.5 0v64M0 .5h64" stroke="#666" />
            </pattern>
          </defs>
          <rect width="257" height="257" fill="#505050" />
          <rect width="257" height="257" fill="url(#uv)" />
          <rect x=".5" y=".5" width="256" height="256" stroke="#808080" />
        </svg>
        <div className="absolute top-[9px] right-2 flex flex-col gap-0.5">
          <RoundButton icon={<ZoomIcon />} label="Zoom" />
          <RoundButton icon={<HandIcon />} label="Pan" />
        </div>
        <RegionTab side="left" className="top-[14px] bg-[#353535]" />
        <RegionTab side="right" className="top-[14px] bg-[#353535]" />
      </div>
    </section>
  );
}

function StatusBar() {
  return (
    <footer className="mt-0.5 flex h-[18px] shrink-0 items-center bg-[#303030] pr-2 pl-3 text-[#a0a0a0]">
      <span className="flex w-16 items-center gap-2.5">
        <MouseIcon button="left" />
        Select
      </span>
      <span className="flex w-[172px] items-center gap-1.5">
        <MouseIcon button="left" drag />
        Box Select
      </span>
      <span className="flex w-[236px] items-center gap-2.5">
        <MouseIcon button="middle" />
        Rotate View
      </span>
      <span className="flex items-center gap-2.5">
        <MouseIcon button="right" />
        Object Context Menu
      </span>
      <span className="ml-auto">Collection &nbsp;&nbsp;| Verts:0 | Faces:0 | Tris:0 | Objects:0/0 | 2.92.0</span>
    </footer>
  );
}

export default function App() {
  return (
    <div className="flex h-screen flex-col overflow-hidden bg-[#1f1f1f] pb-px font-['DejaVu_Sans_Condensed','DejaVu_Sans',sans-serif] text-[11px] leading-4 [text-shadow:0_1px_1px_rgb(0_0_0/0.5)]">
      <TitleBar />
      <TopBar />
      <main className="flex min-h-0 flex-1 gap-[3px] pr-0.5 pl-px">
        <div className="flex min-w-0 flex-1 flex-col gap-[3px]">
          <Viewport />
          <GraphEditor />
        </div>
        <div className="flex w-[416px] flex-col gap-[3px]">
          <Outliner />
          <Properties />
          <ImageEditor />
        </div>
      </main>
      <StatusBar />
    </div>
  );
}
